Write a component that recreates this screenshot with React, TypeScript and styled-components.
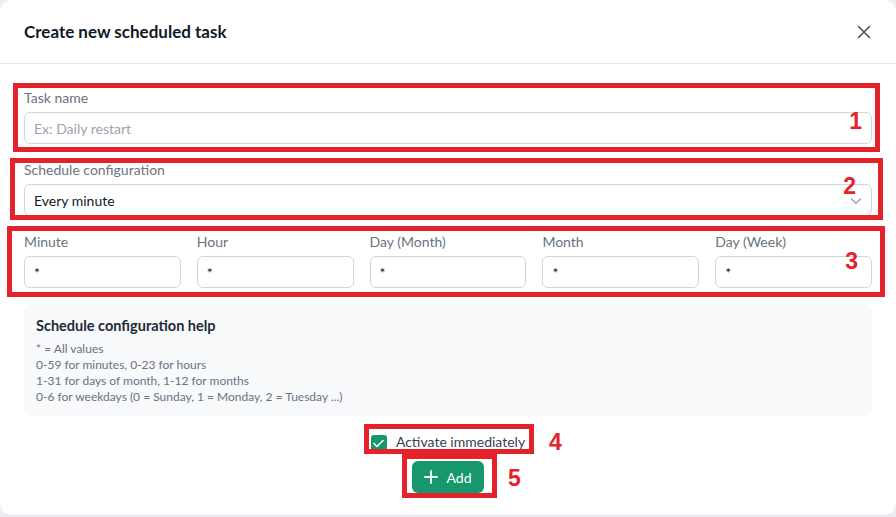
import React from "react";
import styled, { createGlobalStyle } from "styled-components";

const Global = createGlobalStyle`
  html, body { margin: 0; padding: 0; background: #eceef2; }
  body { font-family: Lato, "Noto Sans", sans-serif; }
  * { box-sizing: border-box; }
`;

const RED = "#e3222c";
const GREEN = "#17976c";

const Modal = styled.div`
  width: 896px;
  height: 516px;
  background: #ffffff;
  border-radius: 12px;
  border-bottom: 1px solid #e2e3ef;
  display: flex;
  flex-direction: column;
  overflow: hidden;
`;

const Header = styled.header`
  height: 64px;
  flex: none;
  display: flex;
  align-items: center;
  justify-content: space-between;
  padding: 0 24px;
  border-bottom: 1px solid #e5e7eb;
`;

const Title = styled.h2`
  margin: 0;
  font-size: 17px;
  font-weight: 700;
  color: #111827;
`;

const CloseButton = styled.button`
  border: none;
  background: none;
  padding: 0;
  width: 16px;
  height: 16px;
  display: flex;
  align-items: center;
  justify-content: center;
  color: #4b5563;
`;

const Body = styled.div`
  padding: 26px 24px 0;
  display: flex;
  flex-direction: column;
`;

const Field = styled.div<{ $mt?: number }>`
  position: relative;
  display: flex;
  flex-direction: column;
  gap: 6px;
  margin-top: ${(p) => p.$mt ?? 0}px;
`;

const Label = styled.label`
  font-size: 14px;
  line-height: 16px;
  color: #6b7280;
`;

const Input = styled.input`
  width: 100%;
  height: 32px;
  border: 1px solid #d1d5db;
  border-radius: 6px;
  padding: 0 9px;
  font-family: inherit;
  font-size: 14px;
  color: #111827;
  background: #fff;
  outline: none;
  &::placeholder { color: #9ca3af; }
`;

const SelectBox = styled.div`
  position: relative;
  height: 32px;
  border: 1px solid #d1d5db;
  border-radius: 6px;
  padding: 0 9px;
  display: flex;
  align-items: center;
  justify-content: space-between;
  font-size: 14px;
  color: #111827;
`;

const Chevron = styled.span`
  display: flex;
  color: #9ca3af;
  margin-top: 2px;
`;

const CronGrid = styled.div`
  position: relative;
  display: grid;
  grid-template-columns: repeat(5, 1fr);
  column-gap: 16px;
  margin-top: 18px;
`;

const CronCell = styled.div`
  display: flex;
  flex-direction: column;
  gap: 6px;
`;

const Help = styled.div`
  margin-top: 16px;
  background: #f8f9fb;
  border-radius: 8px;
  padding: 14px 12px 11px;
`;

const HelpTitle = styled.div`
  font-size: 14.5px;
  font-weight: 700;
  color: #1f2937;
  line-height: 16px;
  margin-bottom: 7px;
`;

const HelpLine = styled.div`
  font-size: 12px;
  line-height: 16px;
  color: #6b7280;
`;

const Footer = styled.div`
  display: flex;
  flex-direction: column;
  align-items: center;
`;

const CheckRow = styled.label`
  position: relative;
  display: inline-flex;
  align-items: center;
  gap: 9px;
  height: 16px;
  line-height: 16px;
  margin-top: 19px;
  font-size: 14px;
  color: #374151;
`;

const CheckText = styled.span`
  line-height: 16px;
  margin-top: -2px;
`;

const CheckBox = styled.span`
  width: 16px;
  height: 16px;
  border-radius: 3px;
  background: ${GREEN};
  display: flex;
  align-items: center;
  justify-content: center;
  color: #fff;
`;

const AddButton = styled.button`
  position: relative;
  margin-top: 10px;
  width: 72px;
  height: 32px;
  border: none;
  border-radius: 6px;
  background: ${GREEN};
  color: #fff;
  font-family: inherit;
  font-size: 14px;
  display: flex;
  align-items: center;
  justify-content: center;
  gap: 8px;
  padding: 0;
`;

const Frame = styled.span<{ $t: number; $r: number; $b: number; $l: number }>`
  position: absolute;
  top: ${(p) => p.$t}px;
  right: ${(p) => p.$r}px;
  bottom: ${(p) => p.$b}px;
  left: ${(p) => p.$l}px;
  border: 5px solid ${RED};
  pointer-events: none;
`;

const Num = styled.span<{ $top: number; $right?: number; $left?: number }>`
  position: absolute;
  top: ${(p) => p.$top}px;
  ${(p) => (p.$right !== undefined ? `right: ${p.$right}px;` : "")}
  ${(p) => (p.$left !== undefined ? `left: ${p.$left}px;` : "")}
  font-family: "Liberation Sans", Arial, sans-serif;
  font-weight: 700;
  font-size: 23px;
  line-height: 24px;
  color: ${RED};
  pointer-events: none;
`;

const cron = ["Minute", "Hour", "Day (Month)", "Month", "Day (Week)"];

export default function App() {
  return (
    <>
      <Global />
      <Modal>
        <Header>
          <Title>Create new scheduled task</Title>
          <CloseButton aria-label="Close">
            <svg width="14" height="14" viewBox="0 0 14 14" fill="none" stroke="currentColor" strokeWidth="1.6" strokeLinecap="round">
              <path d="M1.5 1.5l11 11M12.5 1.5l-11 11" />
            </svg>
          </CloseButton>
        </Header>
        <Body>
          <Field>
            <Label>Task name</Label>
            <Input placeholder="Ex: Daily restart" />
            <Frame $t={-7} $r={-8} $b={-8} $l={-11} />
            <Num $top={19} $right={10}>1</Num>
          </Field>
          <Field $mt={18}>
            <Label>Schedule configuration</Label>
            <SelectBox>
              <span>Every minute</span>
              <Chevron>
                <svg width="12" height="8" viewBox="0 0 12 8" fill="none" stroke="currentColor" strokeWidth="1.3">
                  <path d="M1 1.5l5 5 5-5" />
                </svg>
              </Chevron>
            </SelectBox>
            <Frame $t={-4} $r={-11} $b={-4} $l={-14} />
            <Num $top={12} $right={16}>2</Num>
          </Field>
          <CronGrid>
            {cron.map((c) => (
              <CronCell key={c}>
                <Label>{c}</Label>
                <Input defaultValue="*" />
              </CronCell>
            ))}
            <Frame $t={-8} $r={-13} $b={-9} $l={-17} />
            <Num $top={15} $right={14}>3</Num>
          </CronGrid>
          <Help>
            <HelpTitle>Schedule configuration help</HelpTitle>
            <HelpLine>* = All values</HelpLine>
            <HelpLine>0-59 for minutes, 0-23 for hours</HelpLine>
            <HelpLine>1-31 for days of month, 1-12 for months</HelpLine>
            <HelpLine>0-6 for weekdays (0 = Sunday, 1 = Monday, 2 = Tuesday ...)</HelpLine>
          </Help>
          <Footer>
            <CheckRow>
              <CheckBox>
                <svg width="11" height="9" viewBox="0 0 11 9" fill="none" stroke="currentColor" strokeWidth="1.6" strokeLinecap="round" strokeLinejoin="round">
                  <path d="M1 4.5l3 3L10 1.5" />
                </svg>
              </CheckBox>
              <CheckText>Activate immediately</CheckText>
              <Frame $t={-11} $r={-9} $b={-3} $l={-7} />
              <Num $top={-5} $left={178}>4</Num>
            </CheckRow>
            <AddButton>
              <svg width="14" height="14" viewBox="0 0 14 14" fill="none" stroke="currentColor" strokeWidth="1.8" strokeLinecap="round">
                <path d="M7 1v12M1 7h12" />
              </svg>
              <span>Add</span>
              <Frame $t={-7} $r={-13} $b={-5} $l={-10} />
              <Num $top={5} $left={96}>5</Num>
            </AddButton>
          </Footer>
        </Body>
      </Modal>
    </>
  );
}
